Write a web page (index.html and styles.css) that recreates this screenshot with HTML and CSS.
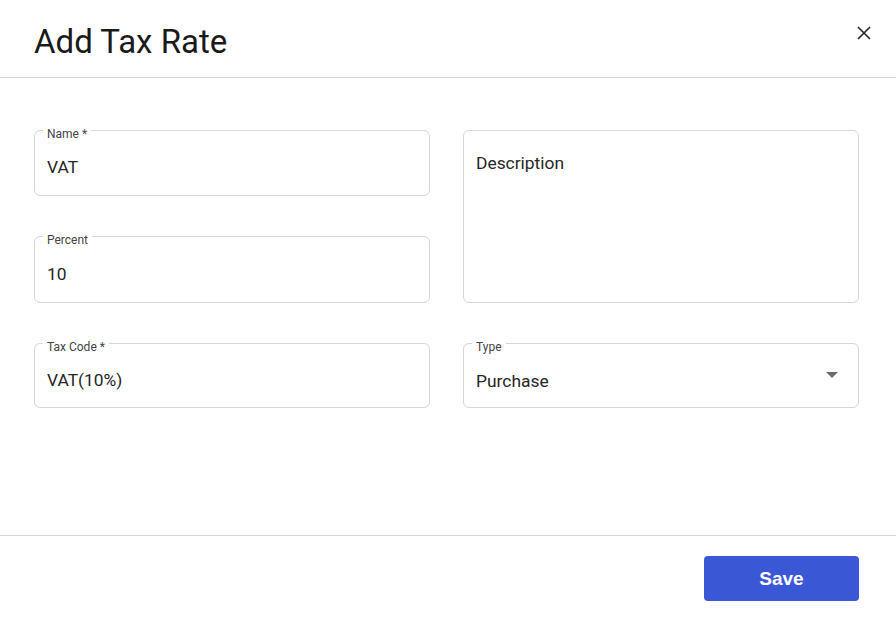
FILE: index.html
```html
<!DOCTYPE html>
<html>
<head>
<meta charset="utf-8">
<link rel="stylesheet" href="styles.css">
</head>
<body>
<div class="dialog">
  <header class="dialog-header">
    <h1 class="dialog-title">Add Tax Rate</h1>
    <button class="close-btn" aria-label="Close">
      <svg width="14" height="14" viewBox="0 0 14 14"><path d="M1 1L13 13M13 1L1 13" stroke="#222" stroke-width="1.6" fill="none"/></svg>
    </button>
  </header>
  <main class="dialog-body">
    <div class="form-grid">
      <div class="field f-name">
        <span class="field-label">Name *</span>
        <span class="field-value">VAT</span>
      </div>
      <div class="field f-desc">
        <span class="field-placeholder">Description</span>
      </div>
      <div class="field f-percent">
        <span class="field-label">Percent</span>
        <span class="field-value">10</span>
      </div>
      <div class="field f-code">
        <span class="field-label">Tax Code *</span>
        <span class="field-value">VAT(10%)</span>
      </div>
      <div class="field f-type">
        <span class="field-label">Type</span>
        <span class="field-value">Purchase</span>
        <svg class="select-arrow" width="12" height="6" viewBox="0 0 12 6"><path d="M0 0H12L6 6Z" fill="#6b6b6b"/></svg>
      </div>
    </div>
  </main>
  <footer class="dialog-footer">
    <button class="save-btn">Save</button>
  </footer>
</div>
</body>
</html>
```

FILE: styles.css
```css
* { box-sizing: border-box; }
html, body { margin: 0; padding: 0; background: #fff; }
body {
  font-family: Roboto, "Noto Sans", sans-serif;
  color: #222;
  width: 896px;
  height: 620px;
  overflow: hidden;
}
.dialog {
  display: flex;
  flex-direction: column;
  height: 620px;
}
.dialog-header {
  height: 78px;
  border-bottom: 1px solid #d5d2dc;
  display: flex;
  align-items: flex-start;
  justify-content: space-between;
  padding: 0 18px 0 34px;
}
.dialog-title {
  margin: 0;
  margin-top: 22px;
  font-size: 33px;
  line-height: 40px;
  font-weight: 400;
  color: #1a1a1a;
  letter-spacing: 0;
}
.close-btn {
  margin-top: 19px;
  width: 28px;
  height: 28px;
  border: none;
  background: none;
  padding: 0;
  display: flex;
  align-items: center;
  justify-content: center;
  cursor: pointer;
}
.dialog-body {
  flex: 1;
  padding: 52px 37px 0 34px;
}
.form-grid {
  display: grid;
  grid-template-columns: 396px 396px;
  grid-template-rows: 66px 67px 65px;
  column-gap: 33px;
  row-gap: 40px;
}
.field {
  position: relative;
  border: 1px solid #d6d6d6;
  border-radius: 6px;
  display: flex;
  align-items: center;
  padding: 8px 12px 0 12px;
}
.f-name { grid-column: 1; grid-row: 1; }
.f-percent { grid-column: 1; grid-row: 2; }
.f-code { grid-column: 1; grid-row: 3; }
.f-desc { grid-column: 2; grid-row: 1 / span 2; align-items: flex-start; padding-top: 22px; }
.f-type { grid-column: 2; grid-row: 3; padding-top: 10px; }
.field-label {
  position: absolute;
  top: -3px;
  left: 8px;
  padding: 0 4px;
  background: #fff;
  font-size: 12px;
  line-height: 12px;
  color: #444;
}
.field-value, .field-placeholder {
  font-size: 17.4px;
  line-height: 20px;
  color: #262626;
}
.select-arrow {
  position: absolute;
  right: 20px;
  top: 28px;
}
.dialog-footer {
  height: 85px;
  border-top: 1px solid #d5d2dc;
  display: flex;
  justify-content: flex-end;
  align-items: flex-start;
  padding: 20px 37px 0 0;
}
.save-btn {
  width: 155px;
  height: 45px;
  background: #3a57d6;
  color: #fff;
  border: none;
  border-radius: 4px;
  font-family: "Liberation Sans", Arial, sans-serif;
  font-weight: 700;
  font-size: 19px;
  cursor: pointer;
}
```
